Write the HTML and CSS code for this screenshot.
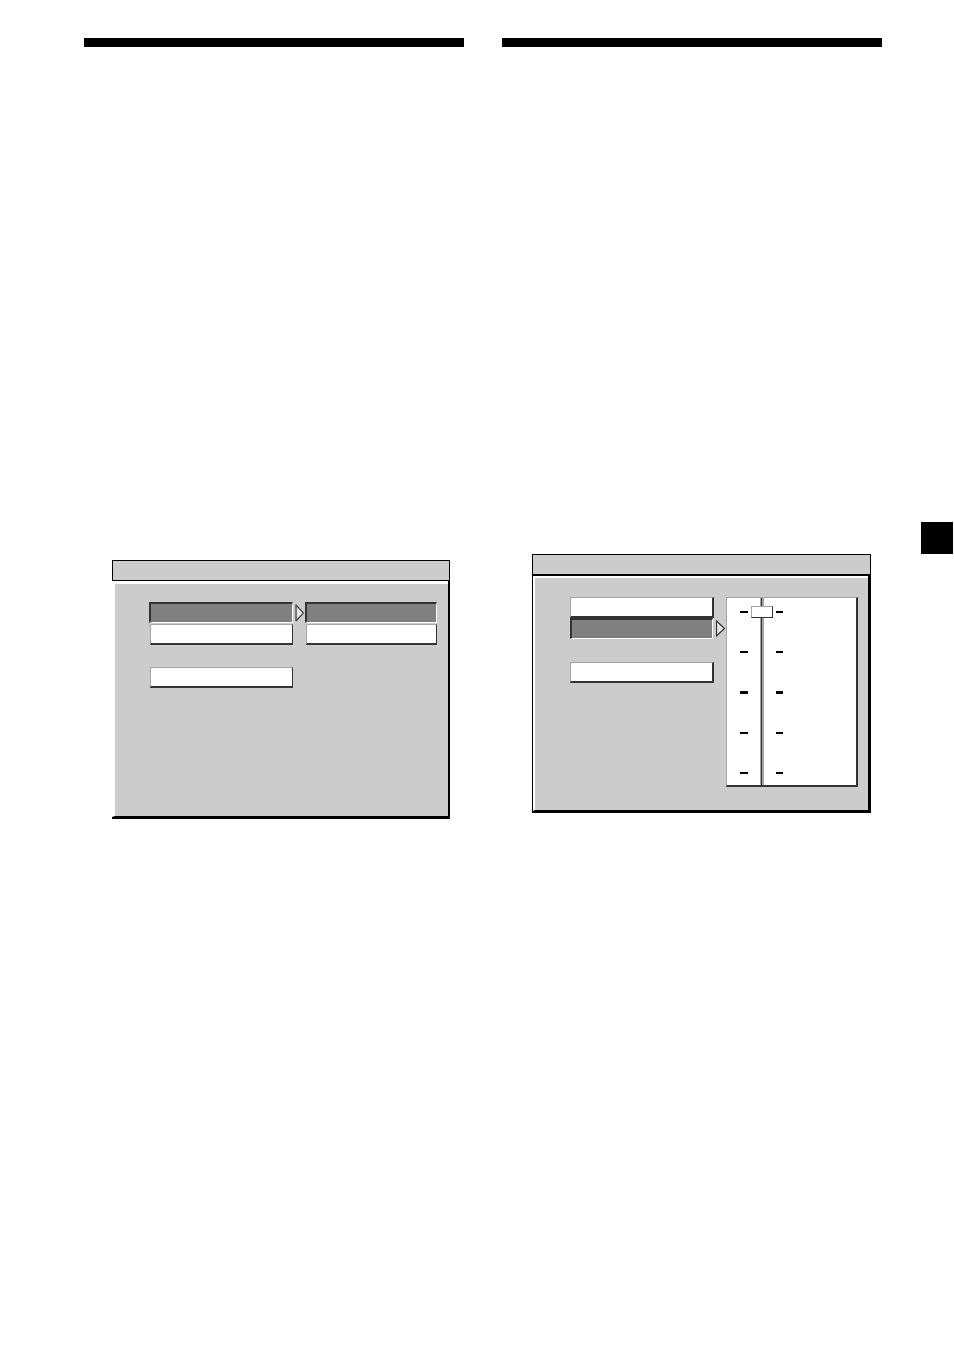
FILE: index.html
```
<!DOCTYPE html>
<html lang="en">
<head>
  <meta charset="UTF-8">
  <title>Menu Settings</title>
  <link rel="stylesheet" href="styles.css">
</head>
<body>

<main class="page">
  <section class="column">
    <hr class="rule">
    <div class="window window-list">
      <div class="titlebar"></div>
      <div class="frame">
        <div class="content">
          <button type="button" class="item selected" aria-label="Menu item 1"></button>
          <svg class="arrow" viewBox="0 0 10 18" aria-hidden="true">
            <path d="M1 1 L9 9 L1 17 Z" fill="#e6e6e6"/>
            <path d="M1 0.500 V17" fill="none" stroke="#777" stroke-width="2"/>
            <path d="M1 1 L8.500 9 L1 17" fill="none" stroke="#444" stroke-width="1.200"/>
          </svg>
          <button type="button" class="item selected" aria-label="Value 1"></button>
          <button type="button" class="item first" aria-label="Menu item 2"></button>
          <button type="button" class="item last" aria-label="Value 2"></button>
          <button type="button" class="item first" aria-label="Menu item 3"></button>
        </div>
      </div>
    </div>
  </section>

  <section class="column">
    <hr class="rule">
    <div class="window window-level">
      <div class="titlebar"></div>
      <div class="frame">
        <div class="content">
          <button type="button" class="item first" aria-label="Menu item 1"></button>
          <button type="button" class="item first selected" aria-label="Menu item 2"></button>
          <svg class="arrow" viewBox="0 0 10 18" aria-hidden="true">
            <path d="M0.500 1 L8.500 8.500 L0.500 16 Z" fill="#e6e6e6" stroke="#333" stroke-width="1.200"/>
          </svg>
          <button type="button" class="item first" aria-label="Menu item 3"></button>
          <div class="level">
            <div class="ticks"><i></i><i></i><i></i><i></i><i></i></div>
            <input type="range" class="slider" min="0" max="4" value="4" aria-label="Level">
            <div class="ticks ticks-right"><i></i><i></i><i></i><i></i><i></i></div>
          </div>
        </div>
      </div>
    </div>
  </section>
</main>

<div class="page-tab"></div>

</body>
</html>
```
FILE: styles.css
```
* {
  box-sizing: border-box;
}
body {
  margin: 0;
  background-color: #fff;
  font-family: "Liberation Sans", Arial, sans-serif;
}
.page {
  display: grid;
  grid-template-columns: 1fr 1fr;
  gap: 38px;
  padding: 38px 72px 38px 84px;
}
.rule {
  height: 9px;
  margin: 0;
  border: 0;
  background-color: #000;
}

/* windows */
.window-list {
  margin: 513px 14px 0 28px;
}
.window-level {
  margin: 507px 11px 0 30px;
  border-left: 1px solid #000;
}
.titlebar {
  height: 21px;
  border: 1px solid #000;
  background-color: #ccc;
}
.window-level .titlebar {
  height: 22px;
  border-bottom-width: 2px;
  border-left: 0;
}
.frame {
  border-right: 2px solid #000;
  border-bottom: 2px solid #000;
}
.window-level .frame {
  border-right-width: 3px;
}
.content {
  display: grid;
  grid-template-columns: 144fr 12px 132fr;
  align-items: start;
  border: solid #fff;
  border-bottom-color: #000;
  background-color: #ccc;
}
.window-list .content {
  grid-template-rows: 22px 43px 21px;
  padding: 18px 11px 128px 34px;
  border-width: 3px 0 1px 3px;
}
.window-level .content {
  grid-template-rows: 21px 44px 21px 1fr;
  padding: 19px 10px 23px 35px;
  border-width: 2px 0 1px 2px;
}

/* raised and pressed items */
.item {
  height: 21px;
  padding: 0;
  border-style: solid;
  border-width: 1px 1px 2px 1px;
  border-color: #a5a5a5 #333 #333 #a5a5a5;
  border-radius: 0;
  background-color: #fff;
}
.item.selected {
  border-width: 2px 1px 1px 2px;
  border-color: #333 #fff #fff #333;
  background-color: #808080;
}
.window-list .item:not(.selected) {
  margin-left: 1px;
}
.first {
  grid-column: 1;
}
.last {
  grid-column: 3;
}
.window-level .item:not(.selected) {
  border-right-width: 2px;
}
.window-level .item.selected {
  margin-right: 1px;
}
.arrow {
  width: 10px;
  height: 18px;
  margin: 2px 0 0 2px;
}

/* level slider */
.level {
  grid-column: 3;
  grid-row: 1 / -1;
  display: flex;
  gap: 3px;
  height: 190px;
  padding-left: 13px;
  border-style: solid;
  border-width: 1px 2px 2px 1px;
  border-color: #a5a5a5 #333 #333 #a5a5a5;
  background-color: #fff;
}
.ticks {
  display: flex;
  flex-direction: column;
  justify-content: space-between;
  width: 8px;
  padding: 13px 0 11px;
}
.ticks-right {
  width: 7px;
}
.ticks i {
  height: 2px;
  background-color: #000;
}
.ticks i:nth-child(3) {
  height: 3px;
}
.slider {
  -webkit-appearance: none;
  appearance: none;
  writing-mode: vertical-lr;
  direction: rtl;
  width: 22px;
  height: 187px;
  margin: 0;
  padding: 8px 0 6px;
  background: linear-gradient(to right, #a5a5a5 1px, #333 1px, #333 2px, #a5a5a5 2px) center / 4px 100% no-repeat;
}
.slider::-webkit-slider-thumb {
  -webkit-appearance: none;
  width: 22px;
  height: 12px;
  border-style: solid;
  border-width: 1px;
  border-color: #a5a5a5 #333 #333 #a5a5a5;
  border-radius: 0;
  background-color: #fff;
}

/* black tab on the page edge */
.page-tab {
  position: absolute;
  top: 522px;
  right: 1px;
  width: 32px;
  height: 32px;
  background-color: #000;
}
```
